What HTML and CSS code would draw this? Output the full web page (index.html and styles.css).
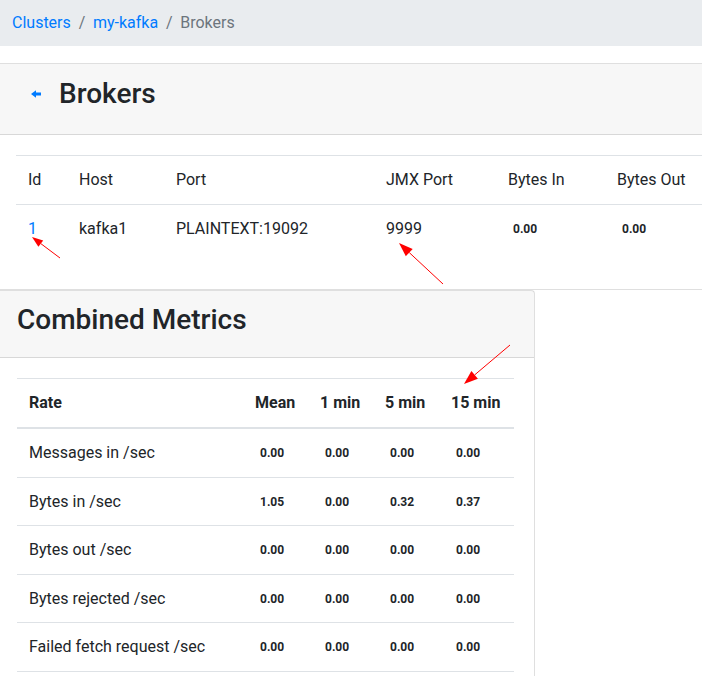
FILE: index.html
```html
<!DOCTYPE html>
<html>
<head>
<meta charset="utf-8">
<link rel="stylesheet" href="styles.css">
</head>
<body>
<div class="page">
  <nav class="breadcrumb">
    <a href="#">Clusters</a><span class="sep">/</span><a href="#">my-kafka</a><span class="sep">/</span><span class="current">Brokers</span>
  </nav>

  <section class="card card-wide">
    <header class="card-header brokers-header">
      <a class="back" href="#"><svg width="10" height="10" viewBox="0 0 10 10"><path d="M0 5 L5 1.2 L5 3.6 L10 3.6 L10 6.4 L5 6.4 L5 8.8 Z" fill="#007bff"/></svg></a>
      <h3 class="title">Brokers</h3>
    </header>
    <div class="card-body brokers-body">
      <table class="table brokers">
        <colgroup><col class="c-id"><col class="c-host"><col class="c-port"><col class="c-jmx"><col class="c-in"><col></colgroup>
        <thead>
          <tr><th>Id</th><th>Host</th><th>Port</th><th>JMX Port</th><th>Bytes In</th><th>Bytes Out</th></tr>
        </thead>
        <tbody>
          <tr><td><a href="#">1</a></td><td>kafka1</td><td>PLAINTEXT:19092</td><td>9999</td><td class="val">0.00</td><td class="val">0.00</td></tr>
        </tbody>
      </table>
    </div>
  </section>

  <section class="card card-metrics">
    <header class="card-header metrics-header">
      <h3 class="title">Combined Metrics</h3>
    </header>
    <div class="card-body">
      <table class="table metrics">
        <colgroup><col class="m-rate"><col class="m-col"><col class="m-col"><col class="m-col5"><col></colgroup>
        <thead>
          <tr><th>Rate</th><th>Mean</th><th>1 min</th><th>5 min</th><th>15 min</th></tr>
        </thead>
        <tbody>
          <tr><td>Messages in /sec</td><td class="val">0.00</td><td class="val">0.00</td><td class="val">0.00</td><td class="val">0.00</td></tr>
          <tr><td>Bytes in /sec</td><td class="val">1.05</td><td class="val">0.00</td><td class="val">0.32</td><td class="val">0.37</td></tr>
          <tr><td>Bytes out /sec</td><td class="val">0.00</td><td class="val">0.00</td><td class="val">0.00</td><td class="val">0.00</td></tr>
          <tr><td>Bytes rejected /sec</td><td class="val">0.00</td><td class="val">0.00</td><td class="val">0.00</td><td class="val">0.00</td></tr>
          <tr><td>Failed fetch request /sec</td><td class="val">0.00</td><td class="val">0.00</td><td class="val">0.00</td><td class="val">0.00</td></tr>
        </tbody>
      </table>
    </div>
  </section>
</div>

<svg class="annotations" width="702" height="676" viewBox="0 0 702 676">
  <line x1="60" y1="258" x2="40.8" y2="243.6" stroke="#ff0000" stroke-width="1"/>
  <polygon points="32,237 43.2,240.4 38.4,246.8" fill="#ff0000"/>
  <line x1="443" y1="284" x2="409.3" y2="252.6" stroke="#ff0000" stroke-width="1"/>
  <polygon points="399,243 412.7,248.9 405.8,256.2" fill="#ff0000"/>
  <line x1="510" y1="345" x2="474.7" y2="374.9" stroke="#ff0000" stroke-width="1"/>
  <polygon points="464,384 477.9,378.8 471.4,371.1" fill="#ff0000"/>
</svg>
</body>
</html>
```

FILE: styles.css
```css
html, body {
  margin: 0;
  padding: 0;
  overflow: hidden;
  background: #fff;
}
body {
  font-family: Roboto, "Liberation Sans", Arial, sans-serif;
  font-size: 16px;
  line-height: 1.5;
  color: #212529;
}
a {
  color: #007bff;
  text-decoration: none;
}
.page {
  margin-left: -4px;
  width: 780px;
}
.breadcrumb {
  display: flex;
  align-items: center;
  background: #e9ecef;
  padding: 11px 16px;
  margin-bottom: 17px;
}
.breadcrumb .sep {
  color: #6c757d;
  padding: 0 7.5px 0 8px;
}
.breadcrumb .current {
  color: #6c757d;
}
.card {
  border: 1px solid rgba(0, 0, 0, 0.125);
  border-radius: 4px;
  background: #fff;
}
.card-wide {
  width: 760px;
}
.card-metrics {
  width: 537px;
}
.card-header {
  background: rgba(0, 0, 0, 0.03);
  border-bottom: 1px solid rgba(0, 0, 0, 0.125);
  display: flex;
  align-items: flex-start;
}
.brokers-header {
  padding: 13px 20px 23px 34px;
}
.metrics-header {
  padding: 12px 20px 20px;
}
.back {
  display: flex;
  align-items: center;
  height: 34px;
  margin-right: 18px;
}
.back svg {
  display: block;
}
.title {
  margin: 0;
  font-size: 28px;
  font-weight: 500;
  line-height: 34px;
}
.card-body {
  padding: 20px;
}
.brokers-body {
  padding-left: 19px;
}
.table {
  width: 100%;
  border-collapse: collapse;
  table-layout: fixed;
  margin-bottom: 16px;
}
.table th, .table td {
  text-align: left;
  padding: 12px;
  border-top: 1px solid #dee2e6;
  vertical-align: top;
  white-space: nowrap;
}
.brokers th {
  font-weight: 400;
}
.table td.val {
  font-size: 12px;
  font-weight: 700;
  padding-left: 17px;
  line-height: 24px;
}
.c-id { width: 51px; }
.c-host { width: 97px; }
.c-port { width: 210px; }
.c-jmx { width: 122px; }
.c-in { width: 109px; }
.metrics th {
  font-weight: 700;
  border-bottom: 2px solid #dee2e6;
  vertical-align: bottom;
}
.metrics td {
  padding: 12px 12px 11.5px;
}
.metrics td.val {
  padding: 12px 12px 11.5px 17px;
}
.metrics tbody tr:last-child td {
  border-bottom: 1px solid #dee2e6;
}
.m-rate { width: 226px; }
.m-col { width: 65px; }
.m-col5 { width: 66px; }
.annotations {
  position: absolute;
  top: 0;
  left: 0;
  pointer-events: none;
}
```
